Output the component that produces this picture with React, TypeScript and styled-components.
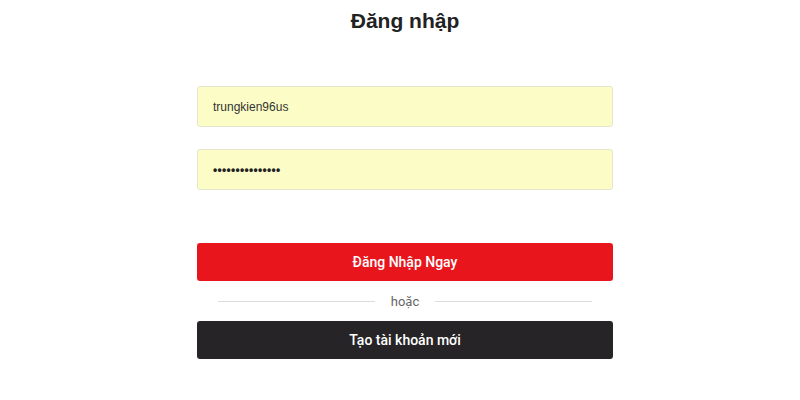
import React from "react";
import styled, { createGlobalStyle } from "styled-components";

const Global = createGlobalStyle`
  html, body { margin: 0; padding: 0; background: #ffffff; }
  body { font-family: "Liberation Sans", Arial, sans-serif; }
`;

const Page = styled.div`
  width: 800px;
  height: 400px;
  display: flex;
  justify-content: center;
  padding-left: 10px;
  box-sizing: border-box;
`;

const Form = styled.div`
  width: 416px;
  display: flex;
  flex-direction: column;
`;

const Title = styled.h1`
  margin: 8px 0 0;
  text-align: center;
  font-size: 21px;
  font-weight: bold;
  color: #222;
  line-height: 26px;
`;

const Field = styled.div<{ $mt: number }>`
  margin-top: ${(p) => p.$mt}px;
  height: 41px;
  box-sizing: border-box;
  background: #fcfdc6;
  border: 1px solid #e6e6cf;
  border-radius: 3px;
  display: flex;
  align-items: center;
  padding-left: 15px;
  font-size: 12px;
  color: #333;
`;

const Dots = styled.span`
  font-size: 12px;
  letter-spacing: 0.3px;
  color: #222;
  font-weight: bold;
`;

const Button = styled.div<{ $bg: string; $mt: number }>`
  margin-top: ${(p) => p.$mt}px;
  height: 38px;
  border-radius: 3px;
  background: ${(p) => p.$bg};
  color: #fff;
  display: flex;
  align-items: center;
  justify-content: center;
  font-family: Roboto, "Liberation Sans", sans-serif;
  font-size: 14px;
  font-weight: 500;
`;

const Divider = styled.div`
  margin: 0 21px;
  height: 40px;
  display: flex;
  align-items: center;
  gap: 16px;
  font-family: Roboto, "Liberation Sans", sans-serif;
  font-size: 13px;
  color: #666;
`;

const Line = styled.div`
  flex: 1;
  height: 1px;
  background: #dcdcdc;
`;

export default function App() {
  return (
    <>
      <Global />
      <Page>
        <Form>
          <Title>Đăng nhập</Title>
          <Field $mt={52}>trungkien96us</Field>
          <Field $mt={22}>
            <Dots>•••••••••••••••</Dots>
          </Field>
          <Button $bg="#e8151d" $mt={53}>Đăng Nhập Ngay</Button>
          <Divider>
            <Line />
            hoặc
            <Line />
          </Divider>
          <Button $bg="#262426" $mt={0}>Tạo tài khoản mới</Button>
        </Form>
      </Page>
    </>
  );
}
